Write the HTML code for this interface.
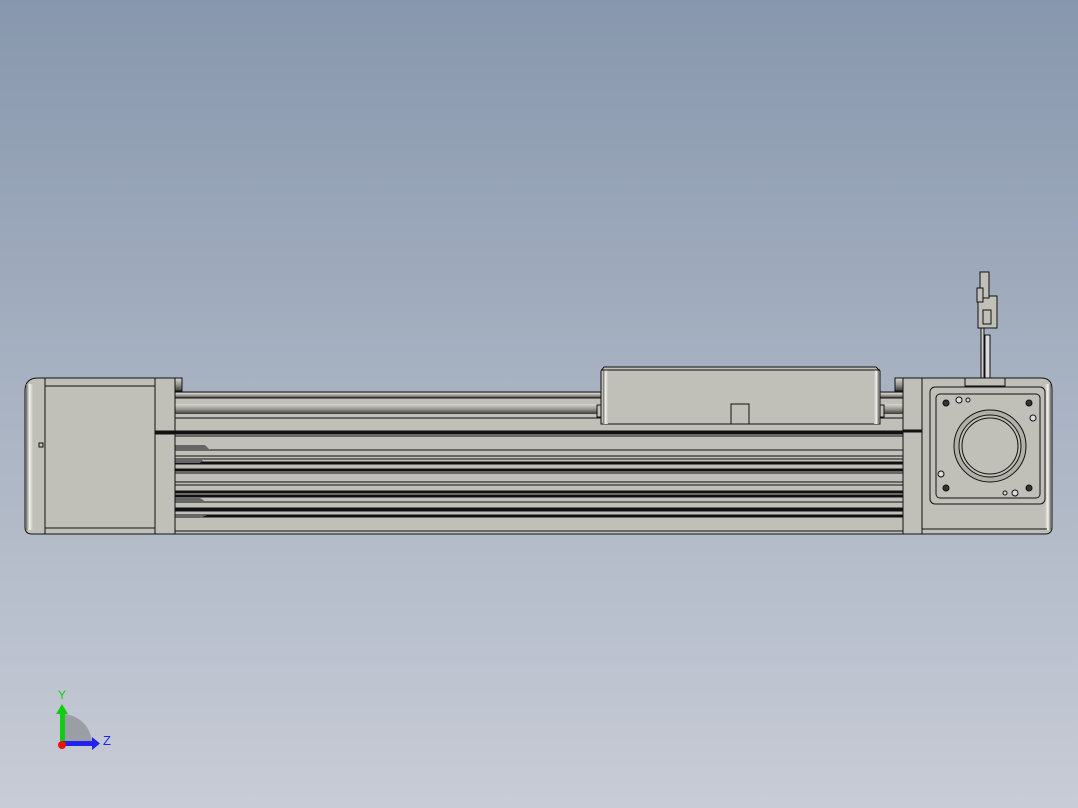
<!DOCTYPE html><html><head><style>body{margin:0;width:1078px;height:808px;overflow:hidden;background:linear-gradient(#8797ad,#a9b3c3 50%,#c8ccd6);}svg{position:absolute;left:0;top:0}</style></head><body>
<svg width="1078" height="808" xmlns="http://www.w3.org/2000/svg">
<defs>
<linearGradient id="rod" x1="0" y1="0" x2="0" y2="1"><stop offset="0" stop-color="#d8d8d0"/><stop offset="0.5" stop-color="#9a9a92"/><stop offset="1" stop-color="#3a3a36"/></linearGradient>
<linearGradient id="edgeL" x1="0" y1="0" x2="1" y2="0"><stop offset="0" stop-color="#6a6a64"/><stop offset="0.5" stop-color="#f4f4ee"/><stop offset="1" stop-color="#c0c0b8"/></linearGradient>
<linearGradient id="edgeR" x1="1" y1="0" x2="0" y2="0"><stop offset="0" stop-color="#6a6a64"/><stop offset="0.5" stop-color="#f4f4ee"/><stop offset="1" stop-color="#c0c0b8"/></linearGradient>
</defs>
<g stroke="#111" stroke-width="1" fill="#c0c0b8">
<!-- rail body -->
<rect x="175" y="392" width="730" height="142"/>
<rect x="175" y="393" width="730" height="5" fill="url(#rod)" stroke="none"/>
<rect x="175" y="404" width="730" height="10" fill="url(#rod)" stroke="none"/>
<line x1="175" y1="398" x2="905" y2="398"/><line x1="175" y1="418" x2="905" y2="418"/>
<rect x="175" y="431" width="730" height="3" fill="#111"/>
<line x1="175" y1="436" x2="905" y2="436"/>
<line x1="175" y1="450" x2="905" y2="450"/><line x1="175" y1="456" x2="905" y2="456"/><line x1="175" y1="459" x2="905" y2="459"/>
<rect x="175" y="462" width="730" height="2" fill="#111"/><rect x="175" y="469" width="730" height="2" fill="#111"/>
<line x1="175" y1="473" x2="905" y2="473"/><line x1="175" y1="482" x2="905" y2="482"/><line x1="175" y1="485" x2="905" y2="485"/>
<rect x="175" y="491" width="730" height="2" fill="#111"/><rect x="175" y="495" width="730" height="2" fill="#111"/>
<line x1="175" y1="502" x2="905" y2="502"/><line x1="175" y1="508" x2="905" y2="508"/>
<rect x="175" y="509" width="730" height="2" fill="#111"/><rect x="175" y="515" width="730" height="2" fill="#111"/>
<line x1="175" y1="531" x2="905" y2="531"/>
<!-- groove ends left -->
<path d="M175 445 H205 L210 450 H175Z M175 463 H200 L205 458 H175Z M175 498 H200 L206 502 H175Z M175 518 H200 L207 515 H175Z" fill="#666" stroke="none"/>
<rect x="167" y="434" width="8" height="52" fill="#c0c0b8"/>
<rect x="905" y="434" width="7" height="52" fill="#c0c0b8"/>
<!-- left motor -->
<path d="M38 378 H175 V534 H32 Q25 534 25 527 V391 Q25 378 38 378Z"/>
<rect x="26" y="384" width="7" height="146" fill="url(#edgeL)" stroke="none"/>
<line x1="45" y1="378" x2="45" y2="534"/><line x1="155" y1="378" x2="155" y2="534"/>
<line x1="45" y1="386" x2="155" y2="386"/><line x1="45" y1="528" x2="155" y2="528"/>
<rect x="155" y="431" width="20" height="3" fill="#111"/>
<rect x="175" y="378" width="7" height="13" fill="url(#rod)"/>
<rect x="39" y="443" width="4" height="4" fill="none"/>
<!-- carriage -->
<path d="M604 367 H876 L880 371 V424 H601 V371Z"/>
<rect x="603" y="370" width="5" height="54" fill="url(#edgeL)" stroke="none"/>
<rect x="874" y="370" width="5" height="54" fill="url(#edgeR)" stroke="none"/>
<line x1="601" y1="370" x2="880" y2="370"/>
<rect x="731" y="404" width="18" height="20"/>
<rect x="597" y="405" width="4" height="12"/><rect x="880" y="405" width="4" height="12"/>
<!-- right end -->
<rect x="895" y="378" width="8" height="13" fill="url(#rod)"/>
<path d="M903 378 H1041 Q1052 378 1052 389 V527 Q1052 534 1045 534 H903Z"/>
<rect x="1045" y="384" width="6" height="146" fill="url(#edgeR)" stroke="none"/>
<line x1="922" y1="378" x2="922" y2="534"/><line x1="903" y1="431" x2="922" y2="431" stroke-width="3"/>
<line x1="922" y1="529" x2="1047" y2="529"/>
<rect x="930" y="387" width="115" height="117" rx="5" fill="none"/>
<rect x="936" y="394" width="104" height="104" rx="4" fill="none"/>
<circle cx="990" cy="446" r="36" fill="#b0b0a8"/>
<circle cx="990" cy="446" r="31" fill="#c0c0b8"/>
<circle cx="990" cy="446" r="28" fill="#c0c0b8"/>
<g fill="#333"><circle cx="946" cy="403" r="3"/><circle cx="1029" cy="403" r="3"/><circle cx="946" cy="488" r="3"/><circle cx="1029" cy="488" r="3"/></g>
<g fill="#ddd"><circle cx="959" cy="400" r="3"/><circle cx="1033" cy="418" r="3"/><circle cx="941" cy="474" r="3"/><circle cx="1015" cy="493" r="3"/><circle cx="968" cy="400" r="2"/><circle cx="1005" cy="493" r="2"/></g>
<!-- connector/cable -->
<rect x="965" y="378" width="40" height="8"/>
<rect x="981" y="328" width="3" height="50" fill="#ccc"/>
<rect x="985" y="335" width="5" height="43" fill="#ddd"/>
<rect x="978" y="296" width="19" height="32"/>
<rect x="983" y="310" width="8" height="14"/>
<rect x="980" y="272" width="9" height="26"/>
<rect x="977" y="288" width="6" height="14"/>
</g>
<!-- axis triad -->
<path d="M62 744 L62 714 A30 30 0 0 1 92 744Z" fill="#9c9ea6"/>
<rect x="60" y="712" width="5" height="32" fill="#1c1"/>
<path d="M56 714 L62 704 L68 714Z" fill="#1c1"/>
<rect x="62" y="741" width="30" height="5" fill="#22e"/>
<path d="M92 737 L100 743.5 L92 750Z" fill="#22e"/>
<circle cx="62" cy="745" r="4" fill="#e11"/>
<text x="58" y="699" font-family="Liberation Sans,sans-serif" font-size="12" fill="#1c1">Y</text>
<text x="103" y="745" font-family="Liberation Sans,sans-serif" font-size="13" fill="#22e">Z</text>
</svg></body></html>
